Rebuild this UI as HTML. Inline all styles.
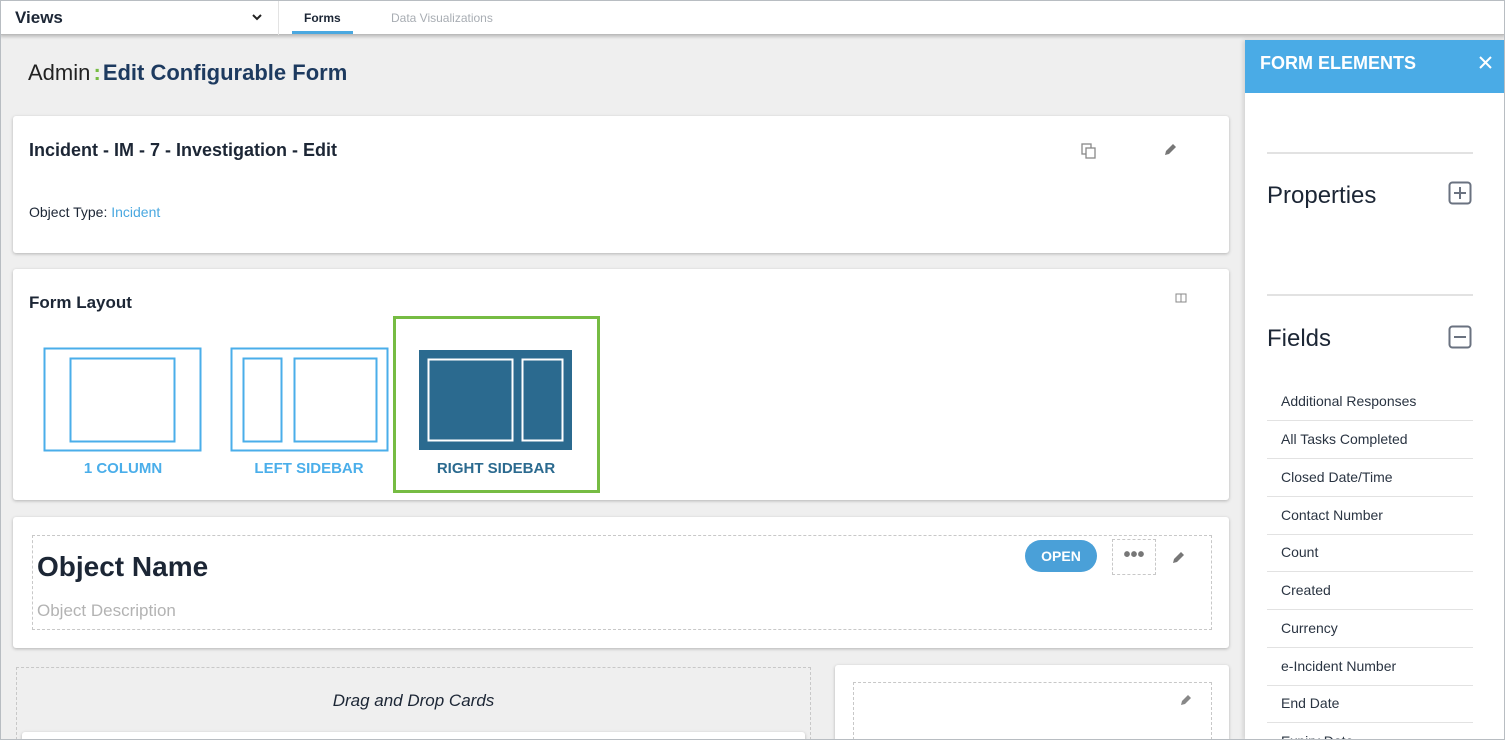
<!DOCTYPE html>
<html style="width:1505px;height:740px;overflow:hidden"><head><style>
*{margin:0;padding:0;box-sizing:border-box}
body{width:1505px;height:740px;overflow:hidden;background:#efefef;font-family:"Liberation Sans",sans-serif;color:#1c2635;position:relative}
.a{position:absolute}
.card{position:absolute;background:#fff;border-radius:3px;box-shadow:0 1px 3px rgba(0,0,0,.25)}
.dash{position:absolute;border:1px dashed #c8c8c8}
.lbl{position:absolute;font-size:15px;font-weight:bold;width:160px;text-align:center}
.fld{position:absolute;left:1281px;font-size:14px;color:#2a3442}
.sep{position:absolute;left:1267px;width:206px;height:1px;background:#e2e2e2}
</style></head><body>
<div class="a" style="left:0;top:0;width:1505px;height:35px;background:#fff;border-bottom:1px solid #bbb;box-shadow:0 2px 3px rgba(0,0,0,.2)"></div>
<div class="a" style="left:15px;top:8px;font-size:17px;font-weight:bold">Views</div>
<svg class="a" style="left:251px;top:12px" width="12" height="10"><path d="M2 3l4 4 4-4" stroke="#222" stroke-width="2" fill="none"/></svg>
<div class="a" style="left:278px;top:0;width:1px;height:35px;background:#e3e3e3"></div>
<div class="a" style="left:304px;top:11px;font-size:12px;font-weight:bold">Forms</div>
<div class="a" style="left:292px;top:31px;width:61px;height:3px;background:#4aa8e0"></div>
<div class="a" style="left:391px;top:11px;font-size:12px;color:#a8adb3">Data Visualizations</div>
<div class="a" style="left:28px;top:60px;font-size:22px;color:#222">Admin <span style="color:#76bc43;font-weight:bold;margin-left:-3px">:</span><span style="color:#1d3a5f;font-weight:bold;margin-left:2px">Edit Configurable Form</span></div>

<div class="card" style="left:13px;top:116px;width:1216px;height:137px"></div>
<div class="a" style="left:29px;top:140px;font-size:18px;font-weight:bold">Incident - IM - 7 - Investigation - Edit</div>
<div class="a" style="left:29px;top:204px;font-size:14px">Object Type: <span style="color:#4aa8e0">Incident</span></div>
<svg class="a" style="left:1080px;top:142px" width="18" height="18"><rect x="2" y="2" width="9" height="10" fill="none" stroke="#888" stroke-width="1.3"/><rect x="6" y="6" width="9" height="10" fill="#fff" stroke="#888" stroke-width="1.3"/></svg>
<svg class="a" style="left:1162px;top:142px" width="16" height="16"><path d="M3 13l1-4 7-7 3 3-7 7z" fill="#777"/></svg>

<div class="card" style="left:13px;top:269px;width:1216px;height:231px"></div>
<div class="a" style="left:29px;top:293px;font-size:17px;font-weight:bold">Form Layout</div>
<svg class="a" style="left:1175px;top:293px" width="12" height="11"><rect x="1" y="1" width="10" height="8" fill="none" stroke="#888"/><path d="M6 1v8" stroke="#888"/></svg>
<svg class="a" style="left:40px;top:345px" width="540" height="110">
<rect x="4.5" y="3.5" width="156" height="102" fill="none" stroke="#4aaeea" stroke-width="2"/>
<rect x="30.5" y="13.5" width="104" height="83" fill="none" stroke="#4aaeea" stroke-width="2"/>
<rect x="191.5" y="3.5" width="156" height="102" fill="none" stroke="#4aaeea" stroke-width="2"/>
<rect x="203.5" y="13.5" width="38" height="83" fill="none" stroke="#4aaeea" stroke-width="2"/>
<rect x="254.5" y="13.5" width="82" height="83" fill="none" stroke="#4aaeea" stroke-width="2"/>
<rect x="379" y="5" width="153" height="100" fill="#2b6a8f"/>
<rect x="388.5" y="14.5" width="84" height="81" fill="none" stroke="#fff" stroke-width="2"/>
<rect x="482.5" y="14.5" width="40" height="81" fill="none" stroke="#fff" stroke-width="2"/>
</svg>
<div class="lbl" style="left:43px;top:460px;color:#4aaeea">1 COLUMN</div>
<div class="lbl" style="left:229px;top:460px;color:#4aaeea">LEFT SIDEBAR</div>
<div class="lbl" style="left:416px;top:460px;color:#2b6a8f">RIGHT SIDEBAR</div>
<div class="a" style="left:393px;top:316px;width:207px;height:177px;border:3px solid #76bc43"></div>

<div class="card" style="left:13px;top:517px;width:1216px;height:131px"></div>
<div class="dash" style="left:32px;top:535px;width:1180px;height:95px"></div>
<div class="a" style="left:37px;top:551px;font-size:28px;font-weight:bold">Object Name</div>
<div class="a" style="left:37px;top:601px;font-size:17px;color:#b3b3b3">Object Description</div>
<div class="a" style="left:1025px;top:540px;width:72px;height:32px;border-radius:16px;background:#4aa0d8;color:#fff;font-size:14px;font-weight:bold;text-align:center;line-height:32px">OPEN</div>
<div class="dash" style="left:1112px;top:539px;width:44px;height:36px;color:#777;font-size:20px;text-align:center;line-height:30px;font-weight:bold">•••</div>
<svg class="a" style="left:1170px;top:550px" width="16" height="16"><path d="M3 13l1-4 7-7 3 3-7 7z" fill="#777"/></svg>

<div class="dash" style="left:16px;top:667px;width:795px;height:73px;border-bottom:none"></div>
<div class="a" style="left:16px;top:691px;width:795px;text-align:center;font-size:17px;font-style:italic">Drag and Drop Cards</div>
<div class="card" style="left:22px;top:732px;width:783px;height:8px;border-radius:3px 3px 0 0"></div>
<div class="card" style="left:835px;top:665px;width:394px;height:75px;border-radius:3px 3px 0 0"></div>
<div class="dash" style="left:853px;top:682px;width:359px;height:58px;border-bottom:none"></div>
<svg class="a" style="left:1178px;top:693px" width="14" height="14"><path d="M3 12l1-4 6-6 3 3-6 6z" fill="#888"/></svg>

<div class="a" style="left:1245px;top:40px;width:260px;height:700px;background:#fff;box-shadow:-2px 0 4px rgba(0,0,0,.12)"></div>
<div class="a" style="left:1245px;top:40px;width:260px;height:53px;background:#4aabe6"></div>
<div class="a" style="left:1260px;top:53px;font-size:18px;font-weight:bold;color:#fff">FORM ELEMENTS</div>
<svg class="a" style="left:1478px;top:55px" width="15" height="15"><path d="M2 2l11 11M13 2L2 13" stroke="#fff" stroke-width="2"/></svg>
<div class="sep" style="top:152px;height:2px"></div>
<div class="a" style="left:1267px;top:182px;font-size:24px">Properties</div>
<svg class="a" style="left:1448px;top:181px" width="25" height="25"><rect x="1.5" y="1.5" width="21" height="21" rx="3" fill="none" stroke="#6a7280" stroke-width="2"/><path d="M12 6v12M6 12h12" stroke="#6a7280" stroke-width="2"/></svg>
<div class="sep" style="top:294px;height:2px"></div>
<div class="a" style="left:1267px;top:325px;font-size:24px">Fields</div>
<svg class="a" style="left:1448px;top:325px" width="25" height="25"><rect x="1.5" y="1.5" width="21" height="21" rx="3" fill="none" stroke="#6a7280" stroke-width="2"/><path d="M6 12h12" stroke="#6a7280" stroke-width="2"/></svg>
<div class="fld" style="top:393px">Additional Responses</div><div class="sep" style="top:420px"></div>
<div class="fld" style="top:431px">All Tasks Completed</div><div class="sep" style="top:458px"></div>
<div class="fld" style="top:469px">Closed Date/Time</div><div class="sep" style="top:496px"></div>
<div class="fld" style="top:507px">Contact Number</div><div class="sep" style="top:534px"></div>
<div class="fld" style="top:544px">Count</div><div class="sep" style="top:571px"></div>
<div class="fld" style="top:582px">Created</div><div class="sep" style="top:609px"></div>
<div class="fld" style="top:620px">Currency</div><div class="sep" style="top:647px"></div>
<div class="fld" style="top:658px">e-Incident Number</div><div class="sep" style="top:685px"></div>
<div class="fld" style="top:695px">End Date</div><div class="sep" style="top:722px"></div>
<div class="fld" style="top:733px">Expiry Date</div>
<div class="a" style="left:0;top:0;width:1505px;height:740px;border:1px solid #b8bdc2;pointer-events:none"></div>
</body></html>
